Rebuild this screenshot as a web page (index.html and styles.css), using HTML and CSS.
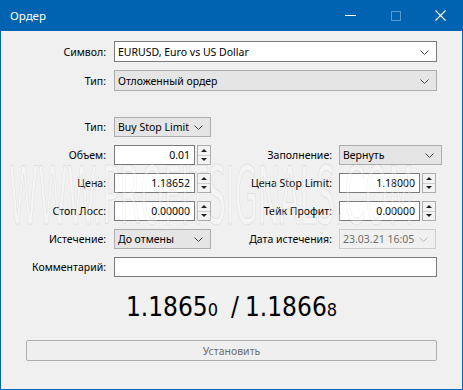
FILE: index.html
```html
<!DOCTYPE html>
<html lang="ru">
<head>
<meta charset="utf-8">
<title>Ордер</title>
<link rel="stylesheet" href="styles.css">
</head>
<body>
<div class="window">
  <div class="titlebar">
    <span class="title">Ордер</span>
    <div class="controls">
      <span class="ctl ctl-min"><svg width="11" height="11" viewBox="0 0 11 11"><line x1="0" y1="5.5" x2="11" y2="5.5" stroke="#fff" stroke-width="1"/></svg></span>
      <span class="ctl ctl-max"><svg width="10" height="10" viewBox="0 0 10 10"><rect x="0.5" y="0.5" width="9" height="9" fill="none" stroke="#fff" stroke-width="1"/></svg></span>
      <span class="ctl ctl-close"><svg width="11" height="11" viewBox="0 0 11 11"><path d="M0.5 0.5 L10.5 10.5 M10.5 0.5 L0.5 10.5" stroke="#fff" stroke-width="1.1"/></svg></span>
    </div>
  </div>
  <div class="content">
    <div class="row r1">
      <label class="lbl">Символ:</label>
      <div class="combo combo-edit w-full"><span class="val">EURUSD, Euro vs US Dollar</span><svg class="chev" width="9" height="5" viewBox="0 0 9 5"><polyline points="0.5,0.5 4.5,4.5 8.5,0.5" fill="none" stroke="#444" stroke-width="1"/></svg></div>
    </div>
    <div class="row r2">
      <label class="lbl">Тип:</label>
      <div class="combo combo-list w-full"><span class="val">Отложенный ордер</span><svg class="chev" width="9" height="5" viewBox="0 0 9 5"><polyline points="0.5,0.5 4.5,4.5 8.5,0.5" fill="none" stroke="#444" stroke-width="1"/></svg></div>
    </div>

    <div class="row r3">
      <label class="lbl">Тип:</label>
      <div class="combo combo-list w-small"><span class="val">Buy Stop Limit</span><svg class="chev" width="9" height="5" viewBox="0 0 9 5"><polyline points="0.5,0.5 4.5,4.5 8.5,0.5" fill="none" stroke="#444" stroke-width="1"/></svg></div>
    </div>

    <div class="row r-pair">
      <div class="half">
        <label class="lbl">Объем:</label>
        <div class="input num">0.01</div>
        <div class="spin"><span class="up"></span><span class="dn"></span></div>
      </div>
      <div class="half right">
        <label class="lbl rl">Заполнение:</label>
        <div class="combo combo-list w-fill"><span class="val">Вернуть</span><svg class="chev" width="9" height="5" viewBox="0 0 9 5"><polyline points="0.5,0.5 4.5,4.5 8.5,0.5" fill="none" stroke="#444" stroke-width="1"/></svg></div>
      </div>
    </div>

    <div class="row r-pair">
      <div class="half">
        <label class="lbl">Цена:</label>
        <div class="input num">1.18652</div>
        <div class="spin"><span class="up"></span><span class="dn"></span></div>
      </div>
      <div class="half right">
        <label class="lbl rl">Цена Stop Limit:</label>
        <div class="input num">1.18000</div>
        <div class="spin"><span class="up"></span><span class="dn"></span></div>
      </div>
    </div>

    <div class="row r-pair">
      <div class="half">
        <label class="lbl">Стоп Лосс:</label>
        <div class="input num">0.00000</div>
        <div class="spin"><span class="up"></span><span class="dn"></span></div>
      </div>
      <div class="half right">
        <label class="lbl rl">Тейк Профит:</label>
        <div class="input num">0.00000</div>
        <div class="spin"><span class="up"></span><span class="dn"></span></div>
      </div>
    </div>

    <div class="row r-pair">
      <div class="half">
        <label class="lbl">Истечение:</label>
        <div class="combo combo-list w-small"><span class="val">До отмены</span><svg class="chev" width="9" height="5" viewBox="0 0 9 5"><polyline points="0.5,0.5 4.5,4.5 8.5,0.5" fill="none" stroke="#444" stroke-width="1"/></svg></div>
      </div>
      <div class="half right">
        <label class="lbl rl">Дата истечения:</label>
        <div class="combo combo-disabled w-small"><span class="val">23.03.21 16:05</span><svg class="chev" width="9" height="5" viewBox="0 0 9 5"><polyline points="0.5,0.5 4.5,4.5 8.5,0.5" fill="none" stroke="#bbb" stroke-width="1"/></svg></div>
      </div>
    </div>

    <div class="row r-comment">
      <label class="lbl">Комментарий:</label>
      <div class="input w-full"></div>
    </div>

    <div class="price">
      <span class="big">1.1865</span><span class="small">0</span><span class="big sep">/</span><span class="big">1.1866</span><span class="small">8</span>
    </div>

    <div class="btn-row">
      <button class="btn" disabled>Установить</button>
    </div>
  </div>
  <div class="watermark">WWW.PROFITSIGNALS.COM</div>
</div>
</body>
</html>
```

FILE: styles.css
```css
* { box-sizing: border-box; }
html, body { margin: 0; padding: 0; }
body {
  width: 463px;
  height: 390px;
  overflow: hidden;
  font-family: "Noto Sans", "Open Sans", sans-serif;
  font-size: 10.5px;
  color: #000;
  background: #f0f0f0;
}
.window {
  position: relative;
  width: 463px;
  height: 390px;
  background: #f0f0f0;
  border: 1px solid #0063b1;
  border-top: none;
  overflow: hidden;
}
.titlebar {
  height: 31px;
  background: #0063b1;
  margin: 0 -1px;
  display: flex;
  align-items: center;
  justify-content: space-between;
  color: #fff;
}
.title {
  padding-left: 10px;
  font-size: 11.5px;
  margin-top: -1px;
}
.controls { display: flex; height: 31px; }
.ctl {
  width: 45px;
  height: 31px;
  display: flex;
  align-items: center;
  justify-content: center;
}
.ctl-min { width: 46px; }
.ctl-max svg { opacity: 0.35; }
.content {
  padding-top: 10px;
}
.row {
  display: flex;
  align-items: center;
  height: 20px;
  margin-bottom: 8px;
}
.r1, .r2 { height: 21px; }
.r2 { margin-bottom: 26px; }
.lbl {
  width: 105px;
  text-align: right;
  margin-right: 8px;
  flex: none;
  white-space: nowrap;
}
.half { display: flex; align-items: center; height: 20px; }
.half.right .lbl.rl { width: 121px; margin-left: 0; margin-right: 7px; }
.combo {
  position: relative;
  height: 100%;
  display: flex;
  align-items: center;
  padding-left: 3px;
  border: 1px solid #adadad;
  background: #e1e1e1;
  flex: none;
}
.combo .val { white-space: nowrap; }
.combo .chev { position: absolute; right: 7px; top: 50%; margin-top: -2px; }
.combo-edit { background: #fff; border-color: #7a7a7a; }
.combo-list { background: #e5e5e5; border-color: #adadad; }
.combo-disabled { background: #f0f0f0; border-color: #cccccc; color: #6d6d6d; }
.w-full { width: 323px; }
.w-small { width: 97px; }
.w-fill { width: 103px; }
.input {
  height: 20px;
  background: #fff;
  border: 1px solid #7a7a7a;
  flex: none;
}
.input.num {
  width: 81px;
  text-align: right;
  padding-right: 4px;
  line-height: 18px;
}
.spin {
  width: 14px;
  height: 20px;
  margin-left: 2px;
  border: 1px solid #adadad;
  background: #f3f3f3;
  display: flex;
  flex-direction: column;
  flex: none;
}
.spin span {
  flex: 1;
  display: flex;
  align-items: center;
  justify-content: center;
}
.spin .up { border-bottom: 1px solid #cfcfcf; }
.spin .up::after {
  content: "";
  border-left: 3px solid transparent;
  border-right: 3px solid transparent;
  border-bottom: 3px solid #222;
}
.spin .dn::after {
  content: "";
  border-left: 3px solid transparent;
  border-right: 3px solid transparent;
  border-top: 3px solid #222;
}
.r-comment { margin-bottom: 0; }
.price {
  height: 56px;
  display: flex;
  align-items: baseline;
  justify-content: center;
  padding-top: 15px;
  font-family: "DejaVu Sans Condensed", "DejaVu Sans", sans-serif;
  color: #000;
}
.price .big { font-size: 26px; }
.price .small { font-size: 18px; }
.price .sep { margin: 0 6px 0 13px; }
.btn-row {
  padding-left: 25px;
  margin-top: 7px;
}
.btn {
  width: 411px;
  height: 21px;
  border: 1px solid #adadad;
  border-radius: 2px;
  background: #efefef;
  color: #6d6d6d;
  font-family: "Noto Sans", "Open Sans", sans-serif;
  font-size: 10.5px;
  padding: 0;
}
.watermark {
  position: absolute;
  left: 8px;
  top: 152px;
  width: 1200px;
  font-family: "DejaVu Sans Condensed", "DejaVu Sans", sans-serif;
  font-size: 80px;
  line-height: 90px;
  color: rgba(255, 255, 255, 0.25);
  -webkit-text-stroke: 1px rgba(0, 0, 0, 0.08);
  transform-origin: 0 0;
  transform: scaleX(0.41);
  pointer-events: none;
}
```
